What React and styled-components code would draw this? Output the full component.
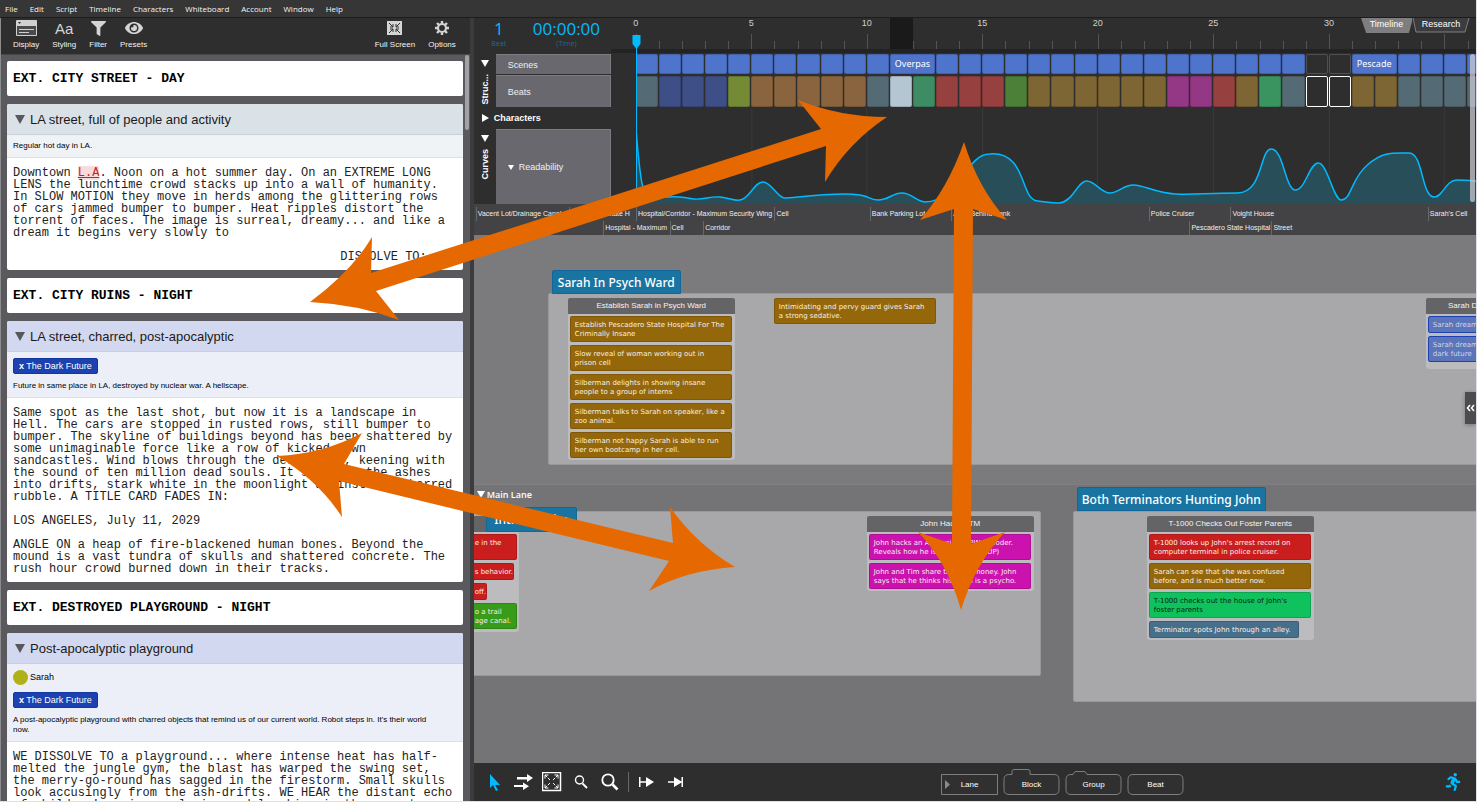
import React from "react";
import styled, { createGlobalStyle, css } from "styled-components";
import { FaEye, FaFilter, FaRunning } from "react-icons/fa";

const GlobalStyle = createGlobalStyle`
    * {
        box-sizing: border-box;
    }
    body {
        margin: 0;
        overflow: hidden;
        font-family: "Liberation Sans", Arial, sans-serif;
    }
    button {
        font-family: inherit;
        border: 0;
        padding: 0;
        background: none;
        color: inherit;
        cursor: pointer;
    }
    h2, h3, p {
        margin: 0;
    }
`;

const AppFrame = styled.div`
    position: relative;
    display: flex;
    flex-direction: column;
    height: 100vh;
    padding: 0 1px 1px 0;
    background: #e0e0e4;
    overflow: hidden;
`;

const MenuBar = styled.nav`
    display: flex;
    flex: none;
    align-items: center;
    gap: 12px;
    height: 18px;
    padding: 0 5px;
    background: #363636;
    border-bottom: 1px solid #1c1c1c;
`;

const MenuItem = styled.button`
    font: 8px/16px "Open Sans", sans-serif;
    color: #f4f4f4;
`;

const Workspace = styled.div`
    display: flex;
    flex: 1;
    min-height: 0;
`;

/* ---------- script side ---------- */

const ScriptPane = styled.section`
    display: flex;
    flex-direction: column;
    width: 32.1%;
    flex: none;
    background: #5a5a5e;
    border-left: 1px solid #8c8c8e;
    border-right: 4px solid #3c3c3c;
`;

const ScriptToolbar = styled.div`
    display: flex;
    flex: none;
    justify-content: space-between;
    height: 37px;
    padding: 2px 14px 0 12px;
    background: #2e2e2e;
    border-bottom: 1px solid #48484a;
`;

const ToolGroup = styled.div`
    display: flex;
    gap: ${(p) => p.$gap}px;
`;

const Tool = styled.button`
    display: flex;
    flex-direction: column;
    align-items: center;
    gap: 3px;
    font-size: 8px;
    line-height: 11px;
    color: #f2f2f2;
`;

const ToolIcon = styled.span`
    display: flex;
    align-items: center;
    justify-content: center;
    height: 16px;
    font-size: 15px;
    color: #d4d4d4;
`;

const ScriptBody = styled.div`
    display: flex;
    flex: 1;
    min-height: 0;
`;

const Pages = styled.div`
    display: flex;
    flex: 1;
    flex-direction: column;
    gap: 8px;
    min-width: 0;
    padding: 6px 2px 0 6px;
    overflow: hidden;
`;

const ScrollTrack = styled.div`
    width: 5px;
    flex: none;
`;

const ScrollThumb = styled.div`
    width: 4px;
    height: 75px;
    border-radius: 2px;
    background: #a2a2a4;
`;

const SceneHeading = styled.h2`
    flex: none;
    padding: 10px 6px;
    border-radius: 2px;
    background: #fff;
    font: bold 13px/15px "Liberation Mono", "Courier New", monospace;
    color: #000;
`;

const Scene = styled.article`
    flex: none;
    border-radius: 2px;
    background: #fff;
    overflow: hidden;
`;

const SceneTitle = styled.h3`
    display: flex;
    align-items: center;
    gap: 5px;
    height: 31px;
    padding: 0 8px;
    background: ${(p) => p.$color};
    border-bottom: 1px solid #c8d0dc;
    font-size: 13px;
    font-weight: normal;
    color: #1a1a1a;
`;

const Summary = styled.div`
    display: flex;
    flex-direction: column;
    align-items: flex-start;
    gap: 7px;
    padding: 6px;
    background: ${(p) => p.$color};
    border-bottom: 1px solid #dadfee;
`;

const SummaryText = styled.p`
    padding-right: 16px;
    font-size: 8px;
    line-height: 10px;
    color: #000;
`;

const Tag = styled.button`
    padding: 0 5px;
    border: 1px solid #1238a0;
    border-radius: 2px;
    background: #1c42b2;
    font-size: 9px;
    line-height: 14px;
    color: #fff;
`;

const Person = styled.span`
    display: flex;
    align-items: center;
    gap: 2px;
    font-size: 9px;
    line-height: 15px;
    color: #000;
`;

const PersonDot = styled.i`
    width: 15px;
    height: 15px;
    border-radius: 50%;
    background: #b0b01a;
`;

const Screenplay = styled.div`
    display: flex;
    flex-direction: column;
    gap: 12px;
    padding: 9px 6px 7px;
    font: 12px/12px "Liberation Mono", "Courier New", monospace;
    color: #222;
`;

const Transition = styled.p`
    align-self: flex-end;
    padding-right: 30px;
`;

const Misspelled = styled.span`
    background: #f8dcdc;
    color: #c82020;
    text-decoration: underline;
`;

const Caret = styled.i`
    flex: none;
    width: 0;
    height: 0;
    border: ${(p) => p.$size}px solid transparent;
    ${(p) =>
        p.$right
            ? css`
                border-left: ${p.$size * 2 - 1}px solid ${p.$color};
                border-right: 0;
            `
            : css`
                border-top: ${p.$size * 2 - 1}px solid ${p.$color};
                border-bottom: 0;
            `}
`;

/* ---------- timeline side ---------- */

const StoryPane = styled.section`
    position: relative;
    display: flex;
    flex: 1;
    flex-direction: column;
    min-width: 0;
    background: #2e2e2e;
`;

const RulerRow = styled.div`
    display: flex;
    height: 31px;
    flex: none;
`;

const Readouts = styled.div`
    display: flex;
    width: 162px;
    flex: none;
    padding-left: 17px;
    gap: 26px;
`;

const Readout = styled.div`
    display: flex;
    flex-direction: column;
    align-items: center;
    min-width: 16px;
    font: 500 17px/22px "Open Sans", sans-serif;
    color: #00baff;
    small {
        font-size: 7px;
        line-height: 7px;
        color: #2a6888;
    }
`;

const Ruler = styled.div`
    display: flex;
    flex: 1;
    min-width: 0;
    overflow-x: clip;
    overflow-y: visible;
    margin-left: -20px;
    padding-left: 20px;
`;

const RulerGroup = styled.div`
    display: flex;
    flex: 0 0 13.75%;
    flex-direction: column;
    justify-content: space-between;
`;

const RulerLabel = styled.span`
    display: flex;
    justify-content: center;
    width: 0;
    font-size: 9px;
    line-height: 10px;
    color: #d0d0d0;
`;

const RulerTicks = styled.div`
    display: flex;
    align-items: flex-end;
    height: 15px;
`;

const Tick = styled.i`
    flex: 1;
    height: ${(p) => (p.$major ? 15 : 8)}px;
    border-left: 1px solid #545456;
`;

const RulerShade = styled.div`
    position: absolute;
    top: 0;
    left: calc(162px + (100% - 162px) * 0.3025);
    width: 23px;
    height: 31px;
    background: #1a1a1a;
`;

const ViewTabs = styled.div`
    position: absolute;
    top: 0;
    right: 6px;
    display: flex;
`;

const ViewTab = styled.button`
    width: ${(p) => (p.$active ? 51 : 58)}px;
    font-size: 9px;
    line-height: 13px;
    color: #fff;
    position: relative;
    svg {
        position: absolute;
        inset: 0;
        width: 100%;
        height: 15px;
    }
    span {
        position: relative;
    }
`;

const Tracks = styled.div`
    display: flex;
    flex: none;
    height: 155px;
`;

const TrackHeads = styled.div`
    display: flex;
    flex-direction: column;
    width: 137px;
    flex: none;
    padding-top: 5px;
`;

const HeadGroup = styled.div`
    display: flex;
    height: ${(p) => p.$height}px;
`;

const Spine = styled.div`
    display: flex;
    flex-direction: column;
    align-items: center;
    gap: 7px;
    width: 22px;
    flex: none;
    padding: 6px 0 0 0;
    font-size: 9px;
    font-weight: bold;
    line-height: 12px;
    color: #fff;
    span {
        writing-mode: vertical-rl;
        transform: rotate(180deg);
    }
`;

const HeadStack = styled.div`
    display: flex;
    flex: 1;
    flex-direction: column;
    gap: 1px;
`;

const HeadBox = styled.div`
    display: flex;
    flex: ${(p) => p.$grow};
    align-items: center;
    gap: 5px;
    padding-left: 12px;
    border-right: 1px solid #7c7c80;
    border-top: 1px solid #7c7c80;
    background: #69686e;
    font-size: 9px;
    color: #f0f0f0;
`;

const CharactersHead = styled.button`
    display: flex;
    align-items: center;
    gap: 5px;
    height: 22px;
    padding-left: 8px;
    font-size: 9px;
    font-weight: bold;
    color: #fff;
`;

const TrackArea = styled.div`
    position: relative;
    display: flex;
    flex: 1;
    flex-direction: column;
    gap: 1px;
    min-width: 0;
    padding-left: 25px;
    border-top: 4px solid #232323;
    overflow: hidden;
`;

const TrackRow = styled.div`
    display: flex;
    flex: none;
    height: ${(p) => p.$height}px;
    margin-top: 1px;
`;

const TrackCell = styled.div`
    flex: 0 0 ${(p) => (p.$span || 1) * 2.75}%;
    padding-right: 1px;
`;

const TrackBlock = styled.div`
    height: 100%;
    padding-left: 4px;
    border: 1px solid ${(p) => p.$line || "rgba(0, 0, 0, 0.15)"};
    border-radius: 2px;
    background: ${(p) => p.$color};
    font: 9px/17px "Noto Sans", sans-serif;
    color: #fff;
    overflow: hidden;
`;

const CurveChart = styled.svg`
    display: block;
    flex: 1;
    width: 100%;
    min-height: 0;
`;

const Playhead = styled.svg`
    position: absolute;
    top: 17px;
    left: 158px;
    width: 9px;
    height: 169px;
`;

const TimelineScroll = styled.div`
    position: absolute;
    top: 36px;
    right: 1px;
    width: 5px;
    height: 148px;
    border-radius: 3px;
    background: rgba(200, 200, 208, 0.75);
`;

const Locations = styled.div`
    flex: none;
    height: 31px;
    padding: 3px 0 0 2px;
    background: #434345;
`;

const LocationRow = styled.div`
    display: flex;
    height: 14px;
    overflow: hidden;
`;

const Location = styled.div`
    flex: ${(p) => p.$grow} 1 0;
    min-width: 0;
    padding-left: 1px;
    border-left: 1px solid ${(p) => (p.$empty ? "transparent" : "#68686a")};
    font-size: 7px;
    line-height: 14px;
    white-space: nowrap;
    overflow: hidden;
    color: #f0f0f0;
`;

/* ---------- whiteboard ---------- */

const Board = styled.div`
    position: relative;
    flex: 1;
    min-height: 0;
    background: #7b7b7d;
    overflow: hidden;
`;

const MainLane = styled.div`
    position: absolute;
    inset: 249px 0 0 0;
    padding: 3px;
    border-top: 1px solid #808082;
    background: #747476;
`;

const LaneTitle = styled.button`
    display: flex;
    align-items: center;
    gap: 2px;
    font: 600 9px/13px "Open Sans", sans-serif;
    color: #fff;
`;

/* things pinned on the board sit at their own coordinates */
const Pinned = styled.div`
    position: absolute;
    left: ${(p) => p.$x}px;
    top: ${(p) => p.$y}px;
    width: ${(p) => p.$w}px;
    height: ${(p) => p.$h}px;
`;

const BlockArea = styled(Pinned)`
    border: 1px solid #98989a;
    border-radius: 2px;
    background: #a8a8aa;
`;

const BlockTab = styled(Pinned)`
    border: 1px solid #13669a;
    border-radius: 2px 2px 0 0;
    background: #1a74a2;
    font: 500 12px/24px "Noto Sans", sans-serif;
    text-align: center;
    white-space: nowrap;
    color: #fff;
`;

const Group = styled(Pinned)`
    display: flex;
    flex-direction: column;
    gap: 2px;
    border-radius: 3px;
    background: #bcbcbe;
`;

const GroupTitle = styled.div`
    flex: none;
    height: 16px;
    border-radius: 2px 2px 0 0;
    background: #646466;
    font-size: 8px;
    line-height: 15px;
    text-align: center;
    white-space: nowrap;
    overflow: hidden;
    color: #f4f4f4;
`;

const Cards = styled.div`
    display: flex;
    flex-direction: column;
    align-items: flex-start;
    gap: 3px;
    padding: 0 2px;
`;

const Card = styled.div`
    flex: none;
    width: ${(p) => p.$w || 162}px;
    padding: 4px 4px 2px;
    border: 1px solid ${(p) => p.$line || "rgba(0, 0, 0, 0.15)"};
    border-radius: 2px;
    background: ${(p) => p.$color};
    font: 7px/9px "DejaVu Sans", Verdana, sans-serif;
    white-space: pre;
    overflow: hidden;
    color: ${(p) => p.$ink || "#f6f0e8"};
`;

const Collapse = styled.button`
    position: absolute;
    top: 157px;
    right: 0;
    display: flex;
    align-items: center;
    justify-content: center;
    width: 11px;
    height: 32px;
    background: #4c4c4e;
    box-shadow: 0 1px 4px rgba(0, 0, 0, 0.3);
`;

const BoardToolbar = styled.div`
    display: flex;
    flex: none;
    align-items: center;
    height: 38px;
    padding: 0 12px 0 14px;
    background: #2e2e2e;
    color: #fff;
`;

const BoardTools = styled.div`
    display: flex;
    flex: 19;
    align-items: center;
    gap: 7px;
`;

const IconButton = styled.button`
    display: flex;
    align-items: center;
    justify-content: center;
    width: ${(p) => p.$w || 22}px;
    height: 22px;
    font-size: 18px;
    color: ${(p) => (p.$active ? "#00baff" : "#fff")};
`;

const Divider = styled.i`
    width: 1px;
    height: 20px;
    background: #68686a;
`;

const AddButtons = styled.div`
    display: flex;
    flex: 21;
    gap: 5px;
    padding-bottom: 2px;
`;

const AddButton = styled.button`
    position: relative;
    width: 57px;
    height: 27px;
    padding-top: 7px;
    font-size: 8px;
    line-height: 20px;
    color: #fff;
    svg {
        position: absolute;
        inset: 0;
        width: 57px;
        height: 27px;
    }
    span {
        position: relative;
    }
`;

const Arrows = styled.svg`
    position: absolute;
    inset: 0;
    width: 100%;
    height: 100%;
    pointer-events: none;
`;

const menus = ["File", "Edit", "Script", "Timeline", "Characters", "Whiteboard", "Account", "Window", "Help"];

const SLATE = "#546a74";
const NAVY = "#3e4f88";
const TAN = "#8a643e";
const RED = "#964040";
const OCHRE = "#7e6534";
const PLUM = "#943886";
const SCENE = "#4f74cc";

const beats = [
    SLATE, NAVY, NAVY, NAVY, "#748a34", TAN, TAN, TAN, TAN, TAN, SLATE, "#b4c6d2", "#3e8c64",
    RED, RED, RED, "#4c7f38", OCHRE, OCHRE, OCHRE, OCHRE, OCHRE, OCHRE, PLUM, PLUM, RED, OCHRE,
    "#3a9460", SLATE, null, null, OCHRE, OCHRE, SLATE, SLATE, SLATE, SLATE,
];

const scenes = [
    ...Array(11).fill({}),
    { name: "Overpas", span: 2 },
    ...Array(16).fill({}),
    { empty: true },
    { empty: true },
    { name: "Pescade", span: 2 },
    ...Array(4).fill({}),
];

const rowOne = [
    [93, "Vacent Lot/Drainage Canal"],
    [66, "Pescadero State H"],
    [139, "Hospital/Corridor - Maximum Security Wing"],
    [95, "Cell"],
    [81, "Bank Parking Lot"],
    [199, "Alley Behind Bank"],
    [81, "Police Cruiser"],
    [199, "Voight House"],
    [47, "Sarah's Cell"],
];

const rowTwo = [
    [127, ""],
    [65, "Hospital - Maximum"],
    [32, "Cell"],
    [490, "Corridor"],
    [81, "Pescadero State Hospital"],
    [205, "Street"],
];

const BROWN = "#94670a";
const MAGENTA = "#cb12ae";

const psychCards = [
    "Establish Pescadero State Hospital For The\nCriminally Insane",
    "Slow reveal of woman working out in\nprison cell",
    "Silberman delights in showing insane\npeople to a group of interns",
    "Silberman talks to Sarah on speaker, like a\nzoo animal.",
    "Silberman not happy Sarah is able to run\nher own bootcamp in her cell.",
];

const curve =
    "M0 0 C2 24 4 50 7 58 C12 68 18 69 32 68 S48 69 58 70 S74 67 84 68 S98 72 104 71 C114 70 118 53 127 53 S141 69 149 69 S180 65 209 65 S230 71 242 71 S256 64 266 64 S280 72 289 73 C325 72 330 25 354 25 C392 22 384 71 402 72 C412 73 414 74 424 74 C438 72 442 52 451 52 S466 65 475 64 S488 56 498 56 S520 64 540 65 S570 64 602 64 C628 64 624 20 636 20 S650 61 660 61 S674 34 683 34 S698 71 706 71 C716 71 716 49 732 36 C748 22 758 24 774 24 C788 24 786 68 799 68 C808 68 810 51 822 51 S834 52 841 52";

function FullScreenIcon() {
    return (
        <svg width="15" height="14" viewBox="0 0 15 14">
            <rect width="15" height="14" fill="#d4d4d4" />
            <path
                d="M2 2l4 4M13 2L9 6M2 12l4-4M13 12L9 8M6 3v3H3M9 3v3h3M6 11V8H3M9 11V8h3"
                stroke="#2e2e2e"
                fill="none"
            />
        </svg>
    );
}

function DisplayIcon() {
    return (
        <svg width="21" height="16" viewBox="0 0 21 16">
            <rect width="21" height="16" rx="1" fill="#d0d0d0" />
            <rect x="1" y="6" width="19" height="9" fill="#4a4a4c" />
            <path d="M3 9.500h15M3 12.500h10" stroke="#d0d0d0" />
            <path d="M2 2h3l-1.500 2z" fill="#2e2e2e" />
        </svg>
    );
}

function GearIcon() {
    return (
        <svg width="16" height="16" viewBox="0 0 16 16" fill="none" stroke="#d4d4d4">
            <circle cx="8" cy="8" r="4" strokeWidth="2.200" />
            <path
                d="M8 1v2.500M8 12.500V15M1 8h2.500M12.500 8H15M3 3l2 2M11 11l2 2M13 3l-2 2M5 11l-2 2"
                strokeWidth="2.400"
            />
        </svg>
    );
}

function AddShape({ kind }) {
    const shapes = {
        Lane: "M.5 6.500h56v20h-56z",
        Block: "M6 6.500h3v-3q0-2 2-2h14q2 0 2 2v3h24q5 0 5 5v10q0 5-5 5H6q-5 0-5-5v-10q0-5 5-5z",
        Group: "M6 6.500h2q1-3 3-3h8q2 0 3 3h29q5 0 5 5v10q0 5-5 5H6q-5 0-5-5v-10q0-5 5-5z",
        Beat: "M6 6.500h45q5 0 5 5v10q0 5-5 5H6q-5 0-5-5v-10q0-5 5-5z",
    };
    return (
        <svg viewBox="0 0 57 27" fill="#303030" stroke="#7e7e80">
            <path d={shapes[kind]} />
            {kind === "Lane" && <path d="M4 12v9l5-4.500z" fill="#8a8a8c" stroke="none" />}
        </svg>
    );
}

function ScriptPanel() {
    return (
        <ScriptPane>
            <ScriptToolbar>
                <ToolGroup $gap={13}>
                    <Tool><ToolIcon><DisplayIcon /></ToolIcon>Display</Tool>
                    <Tool><ToolIcon>Aa</ToolIcon>Styling</Tool>
                    <Tool><ToolIcon><FaFilter /></ToolIcon>Filter</Tool>
                    <Tool><ToolIcon><FaEye size={18} /></ToolIcon>Presets</Tool>
                </ToolGroup>
                <ToolGroup $gap={13}>
                    <Tool><ToolIcon><FullScreenIcon /></ToolIcon>Full Screen</Tool>
                    <Tool><ToolIcon><GearIcon /></ToolIcon>Options</Tool>
                </ToolGroup>
            </ScriptToolbar>
            <ScriptBody>
                <Pages>
                    <SceneHeading>EXT. CITY STREET - DAY</SceneHeading>
                    <Scene>
                        <SceneTitle $color="#dae2e8"><Caret $size={5} $color="#58585c" />LA street, full of people and activity</SceneTitle>
                        <Summary $color="#eff3f6">
                            <SummaryText>Regular hot day in LA.</SummaryText>
                        </Summary>
                        <Screenplay>
                            <p>
                                Downtown <Misspelled>L.A</Misspelled>. Noon on a hot summer day. On an EXTREME LONG LENS
                                the lunchtime crowd stacks up into a wall of humanity. In SLOW MOTION they move in herds
                                among the glittering rows of cars jammed bumper to bumper. Heat ripples distort the
                                torrent of faces. The image is surreal, dreamy... and like a dream it begins very slowly to
                            </p>
                            <Transition>DISSOLVE TO:</Transition>
                        </Screenplay>
                    </Scene>
                    <SceneHeading>EXT. CITY RUINS - NIGHT</SceneHeading>
                    <Scene>
                        <SceneTitle $color="#d2d8ef"><Caret $size={5} $color="#58585c" />LA street, charred, post-apocalyptic</SceneTitle>
                        <Summary $color="#eceff8">
                            <Tag><b>x</b> The Dark Future</Tag>
                            <SummaryText>Future in same place in LA, destroyed by nuclear war. A hellscape.</SummaryText>
                        </Summary>
                        <Screenplay>
                            <p>
                                Same spot as the last shot, but now it is a landscape in Hell. The cars are stopped in
                                rusted rows, still bumper to bumper. The skyline of buildings beyond has been shattered by
                                some unimaginable force like a row of kicked-down sandcastles. Wind blows through the
                                desolation, keening with the sound of ten million dead souls. It scurries the ashes into
                                drifts, stark white in the moonlight against the charred rubble. A TITLE CARD FADES IN:
                            </p>
                            <p>LOS ANGELES, July 11, 2029</p>
                            <p>
                                ANGLE ON a heap of fire-blackened human bones. Beyond the mound is a vast tundra of skulls
                                and shattered concrete. The rush hour crowd burned down in their tracks.
                            </p>
                        </Screenplay>
                    </Scene>
                    <SceneHeading>EXT. DESTROYED PLAYGROUND - NIGHT</SceneHeading>
                    <Scene>
                        <SceneTitle $color="#d2d8ef"><Caret $size={5} $color="#58585c" />Post-apocalyptic playground</SceneTitle>
                        <Summary $color="#eceff8">
                            <Person><PersonDot />Sarah</Person>
                            <Tag><b>x</b> The Dark Future</Tag>
                            <SummaryText>
                                A post-apocalyptic playground with charred objects that remind us of our current world.
                                Robot steps in. It's their world now.
                            </SummaryText>
                        </Summary>
                        <Screenplay>
                            <p>
                                WE DISSOLVE TO a playground... where intense heat has half-melted the jungle gym, the blast
                                has warped the swing set, the merry-go-round has sagged in the firestorm. Small skulls look
                                accusingly from the ash-drifts. WE HEAR the distant echo of children's voices, playing and
                                laughing in the sunset.
                            </p>
                        </Screenplay>
                    </Scene>
                </Pages>
                <ScrollTrack><ScrollThumb /></ScrollTrack>
            </ScriptBody>
        </ScriptPane>
    );
}

function Timeline() {
    return (
        <>
            <RulerShade />
            <RulerRow>
                <Readouts>
                    <Readout>1<small>Beat</small></Readout>
                    <Readout>00:00:00<small>(Time)</small></Readout>
                </Readouts>
                <Ruler>
                    {[0, 5, 10, 15, 20, 25, 30, 35].map((n) => (
                        <RulerGroup key={n}>
                            <RulerLabel>{n < 35 && n}</RulerLabel>
                            <RulerTicks>
                                {[0, 1, 2, 3, 4].map((i) => <Tick key={i} $major={i === 0} />)}
                            </RulerTicks>
                        </RulerGroup>
                    ))}
                </Ruler>
            </RulerRow>
            <Tracks>
                <TrackHeads>
                    <HeadGroup $height={53}>
                        <Spine><Caret $size={4} $color="#fff" /><span>Struc...</span></Spine>
                        <HeadStack>
                            <HeadBox $grow={20}>Scenes</HeadBox>
                            <HeadBox $grow={32}>Beats</HeadBox>
                        </HeadStack>
                    </HeadGroup>
                    <CharactersHead><Caret $size={4} $color="#fff" $right />Characters</CharactersHead>
                    <HeadGroup $height={75}>
                        <Spine><Caret $size={4} $color="#fff" /><span>Curves</span></Spine>
                        <HeadStack>
                            <HeadBox $grow={1}><Caret $size={3} $color="#fff" />Readability</HeadBox>
                        </HeadStack>
                    </HeadGroup>
                </TrackHeads>
                <TrackArea>
                    <TrackRow $height={20}>
                        {scenes.map((s, i) => (
                            <TrackCell key={i} $span={s.span}>
                                <TrackBlock $color={s.empty ? "transparent" : SCENE} $line={s.empty && "#505052"}>{s.name}</TrackBlock>
                            </TrackCell>
                        ))}
                    </TrackRow>
                    <TrackRow $height={31}>
                        {beats.map((color, i) => (
                            <TrackCell key={i}>
                                <TrackBlock $color={color || "transparent"} $line={!color && "#fff"} />
                            </TrackCell>
                        ))}
                    </TrackRow>
                    <CurveChart viewBox="0 -21 841 96" preserveAspectRatio="none">
                        <path d="M116 -21v96M231 -21v96M347 -21v96M462 -21v96M578 -21v96M694 -21v96M809 -21v96" stroke="#3a3a3c" />
                        <path d={curve + " V75 H0 Z"} fill="#284e5a" />
                        <path d={curve} fill="none" stroke="#00baff" strokeWidth="1.500" />
                    </CurveChart>
                </TrackArea>
            </Tracks>
            <Playhead viewBox="0 0 9 169">
                <path d="M.5 0h8v9l-4 5-4-5z" fill="#00baff" />
                <path d="M4.500 12v157" stroke="#00baff" />
            </Playhead>
            <TimelineScroll />
            <ViewTabs>
                <ViewTab $active>
                    <svg viewBox="0 0 50 15" preserveAspectRatio="none"><path d="M0 0h51l-4 15H5z" fill="#7e7e80" /></svg>
                    <span>Timeline</span>
                </ViewTab>
                <ViewTab>
                    <svg viewBox="0 0 58 15" preserveAspectRatio="none"><path d="M1 0l3 14h49l4-14" fill="#3c3c3e" stroke="#7e7e80" /></svg>
                    <span>Research</span>
                </ViewTab>
            </ViewTabs>
            <Locations>
                {[rowOne, rowTwo].map((row, r) => (
                    <LocationRow key={r}>
                        {row.map(([grow, name], i) => <Location key={i} $grow={grow} $empty={!name}>{name}</Location>)}
                    </LocationRow>
                ))}
            </Locations>
        </>
    );
}

function Whiteboard() {
    return (
        <Board>
            <MainLane>
                <LaneTitle><Caret $size={4} $color="#fff" />Main Lane</LaneTitle>
            </MainLane>

            <BlockArea $x={74} $y={58} $w={1100} $h={172} />
            <BlockTab $x={78} $y={35} $w={129} $h={24}>Sarah In Psych Ward</BlockTab>
            <Group $x={94} $y={63} $w={167} $h={162}>
                <GroupTitle>Establish Sarah in Psych Ward</GroupTitle>
                <Cards>
                    {psychCards.map((text) => <Card key={text} $color={BROWN}>{text}</Card>)}
                </Cards>
            </Group>
            <Pinned $x={300} $y={63} $w={163} $h={26}>
                <Card $color={BROWN}>{"Intimidating and pervy guard gives Sarah\na strong sedative."}</Card>
            </Pinned>
            <Group $x={952} $y={63} $w={167} $h={71}>
                <GroupTitle>Sarah Dreams Of The Dark Future</GroupTitle>
                <Cards>
                    <Card $color="#5c74b8" $line="#1c42b2" $ink="#c8d8f4">Sarah dreams of Reese</Card>
                    <Card $color="#5c74b8" $line="#1c42b2" $ink="#c8d8f4">{"Sarah dreams of the\ndark future"}</Card>
                </Cards>
            </Group>

            <BlockArea $x={-10} $y={276} $w={577} $h={165} />
            <Group $x={-6} $y={281} $w={51} $h={116}>
                <GroupTitle />
                <Cards>
                    <Card $w={47} $color="#ca1e1e">{"e in the\n "}</Card>
                    <Card $w={44} $color="#ca1e1e">s behavior.</Card>
                    <Card $w={17} $color="#ca1e1e">off.</Card>
                    <Card $w={47} $color="#389c1a">{"o a trail\nage canal."}</Card>
                </Cards>
            </Group>
            <BlockTab $x={12} $y={272} $w={91} $h={25}>Intro To John</BlockTab>
            <Group $x={393} $y={281} $w={167} $h={75}>
                <GroupTitle>John Hacks ATM</GroupTitle>
                <Cards>
                    <Card $color={MAGENTA}>{"John hacks an ATM using a PIN decoder.\nReveals how he is so smart (SETUP)"}</Card>
                    <Card $color={MAGENTA}>{"John and Tim share the ATM money. John\nsays that he thinks his mom is a psycho."}</Card>
                </Cards>
            </Group>

            <BlockArea $x={599} $y={276} $w={600} $h={191} />
            <BlockTab $x={603} $y={252} $w={189} $h={24}>Both Terminators Hunting John</BlockTab>
            <Group $x={673} $y={281} $w={167} $h={124}>
                <GroupTitle>T-1000 Checks Out Foster Parents</GroupTitle>
                <Cards>
                    <Card $color="#ca1e1e">{"T-1000 looks up John's arrest record on\ncomputer terminal in police cruiser."}</Card>
                    <Card $color={BROWN}>{"Sarah can see that she was confused\nbefore, and is much better now."}</Card>
                    <Card $color="#10c25e" $ink="#06240f">{"T-1000 checks out the house of John's\nfoster parents"}</Card>
                    <Card $w={150} $color="#466f8c">Terminator spots John through an alley.</Card>
                </Cards>
            </Group>

            <Collapse aria-label="Open side panel">
                <svg width="9" height="8" viewBox="0 0 9 8" fill="none" stroke="#fff" strokeWidth="1.500">
                    <path d="M4 1L1.500 4 4 7M8 1L5.500 4 8 7" />
                </svg>
            </Collapse>
        </Board>
    );
}

function WhiteboardToolbar() {
    return (
        <BoardToolbar>
            <BoardTools>
                <IconButton $w={17} $active aria-label="Select">
                    <svg width="17" height="17" viewBox="0 0 17 17"><path d="M2 0v14l3-3 3 6 2-1-3-5h5z" fill="#00baff" /></svg>
                </IconButton>
                <IconButton aria-label="Shift right">
                    <svg width="20" height="16" viewBox="0 0 20 16" fill="#fff">
                        <path d="M4 3h10V0l6 4-6 4V5.500H4zM1 11h9V8.500l6 3.700-6 3.800v-3H1z" />
                    </svg>
                </IconButton>
                <IconButton aria-label="Fit all">
                    <svg width="20" height="20" viewBox="0 0 20 20" fill="none" stroke="#fff">
                        <rect x=".5" y=".5" width="18" height="18" strokeWidth="1.500" />
                        <path d="M3 3l5 5M16 3l-5 5M3 16l5-5M16 16l-5-5" strokeDasharray="3 1" />
                        <path d="M3 6.500V3h3.500M12.500 3H16v3.500M3 12.500V16h3.500M12.500 16H16v-3.500" />
                    </svg>
                </IconButton>
                <IconButton aria-label="Zoom out">
                    <svg width="14" height="14" viewBox="0 0 14 14" fill="none" stroke="#fff">
                        <circle cx="5.500" cy="5" r="4" strokeWidth="1.400" />
                        <path d="M8.500 8.500l4.500 4.500" strokeWidth="2" />
                    </svg>
                </IconButton>
                <IconButton aria-label="Zoom in">
                    <svg width="18" height="18" viewBox="0 0 18 18" fill="none" stroke="#fff">
                        <circle cx="7" cy="7" r="5.700" strokeWidth="1.800" />
                        <path d="M11.500 11.500l5 5" strokeWidth="2.600" />
                    </svg>
                </IconButton>
                <Divider />
                <IconButton aria-label="Go to start">
                    <svg width="15" height="12" viewBox="0 0 15 12" fill="#fff">
                        <path d="M0 1h1.500v4.300H7V1l8 5-8 5V6.700H1.500V11H0z" />
                    </svg>
                </IconButton>
                <IconButton aria-label="Go to end">
                    <svg width="15" height="12" viewBox="0 0 15 12" fill="#fff">
                        <path d="M0 5.300h6V1l7.500 4.500V1H15v10h-1.500V6.500L6 11V6.700H0z" />
                    </svg>
                </IconButton>
            </BoardTools>
            <AddButtons>
                {["Lane", "Block", "Group", "Beat"].map((kind) => (
                    <AddButton key={kind}><AddShape kind={kind} /><span>{kind}</span></AddButton>
                ))}
            </AddButtons>
            <IconButton $active aria-label="Sprint"><FaRunning /></IconButton>
        </BoardToolbar>
    );
}

const App = () => {
    return (
        <AppFrame>
            <GlobalStyle />
            <MenuBar>
                {menus.map((m) => <MenuItem key={m}>{m}</MenuItem>)}
            </MenuBar>
            <Workspace>
                <ScriptPanel />
                <StoryPane>
                    <Timeline />
                    <Whiteboard />
                    <WhiteboardToolbar />
                </StoryPane>
            </Workspace>
            <Arrows viewBox="0 0 1477 802" preserveAspectRatio="none" fill="#e56900">
                <path d="M310 302 Q352 271 372 237 L371 273 L821 129 L798 100 Q840 117 887 117 Q848 143 825 182 L826 146 L376 291 L399 320 Q356 304 310 302z" />
                <path d="M277 456 Q323 454 362 433 L344 464 L673 543 L670 507 Q696 544 735 567 Q687 570 649 591 L669 561 L339 481 L342 517 Q318 480 277 456z" />
                <path d="M964 142 Q978 188 1007 220 L973 209 L971 544 L1005 532 Q975 564 961 610 Q948 563 918 532 L952 544 L954 209 L920 220 Q948 188 964 142z" />
            </Arrows>
        </AppFrame>
    );
};

export default App;
